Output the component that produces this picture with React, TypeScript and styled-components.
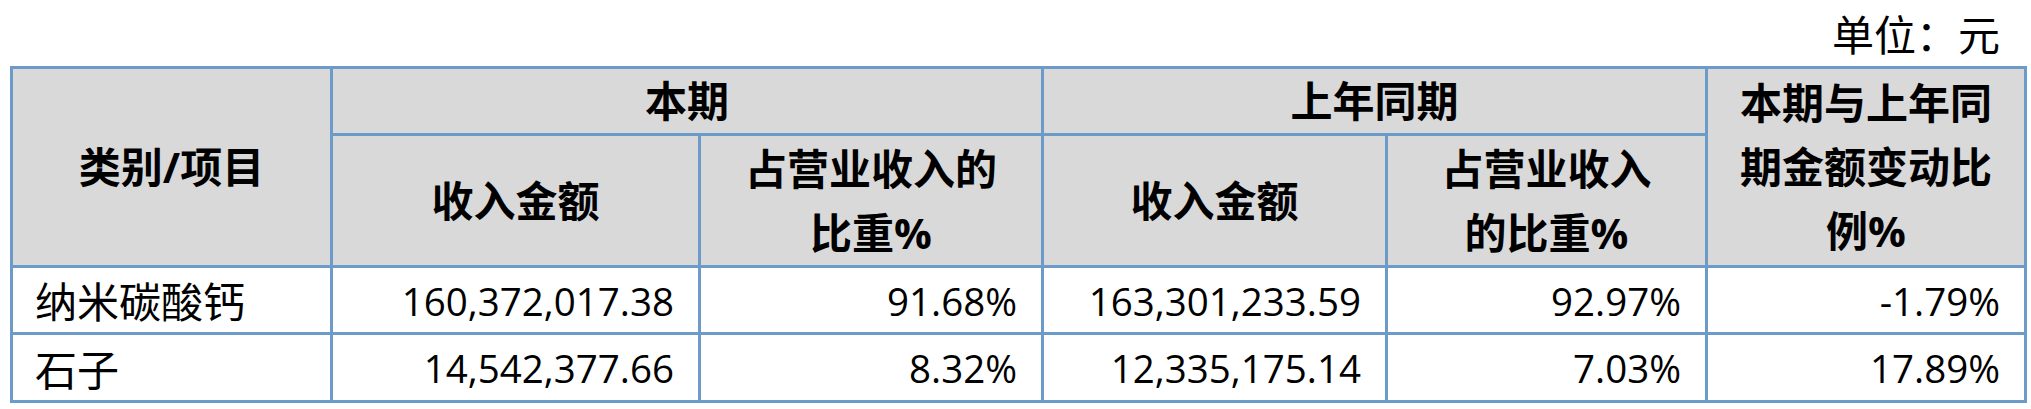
import * as React from 'react'
import styled, { createGlobalStyle } from 'styled-components'

const GlobalStyle = createGlobalStyle`
  html, body {
    margin: 0;
    padding: 0;
    background: #fff;
  }
  body {
    width: 2031px;
    height: 409px;
    overflow: hidden;
    font-family: 'Open Sans', 'Noto Sans CJK SC', sans-serif;
    color: #000;
  }
`

const Page = styled.div`
  display: flex;
  flex-direction: column;
  padding: 0 5px 0 10px;
`

const UnitLine = styled.div`
  height: 66px;
  display: flex;
  align-items: center;
  justify-content: flex-end;
  padding-right: 26px;
  font-family: 'Noto Sans CJK SC', sans-serif;
  font-size: 42px;
  line-height: 1;
`

const Table = styled.table`
  width: 2016px;
  border-collapse: collapse;
  table-layout: fixed;
`

const HeadRow = styled.tr<{ h: number }>`
  height: ${(p) => p.h}px;
`

const BodyRow = styled.tr<{ h: number }>`
  height: ${(p) => p.h}px;
`

const Th = styled.th`
  border: 3px solid #6c9bc9;
  background: #d9d9d9;
  font-family: 'Open Sans', 'Noto Sans CJK SC', sans-serif;
  font-weight: 700;
  font-size: 42px;
  line-height: 64px;
  text-align: center;
  vertical-align: middle;
  padding: 0 10px;
`

const Td = styled.td<{ num?: boolean }>`
  border: 3px solid #6c9bc9;
  background: #fff;
  font-family: ${(p) => (p.num ? "'Open Sans', sans-serif" : "'Noto Sans CJK SC', sans-serif")};
  font-size: ${(p) => (p.num ? '38.5px' : '42px')};
  line-height: 1;
  text-align: ${(p) => (p.num ? 'right' : 'left')};
  vertical-align: middle;
  padding: ${(p) => (p.num ? '2px 24px 0 0' : '0 0 0 22px')};
  white-space: nowrap;
`

const colWidths = [320, 368, 343, 344, 320, 319]

const rows = [
  ['纳米碳酸钙', '160,372,017.38', '91.68%', '163,301,233.59', '92.97%', '-1.79%'],
  ['石子', '14,542,377.66', '8.32%', '12,335,175.14', '7.03%', '17.89%'],
]

const App: React.FunctionComponent = () => {
  return (
    <Page>
      <GlobalStyle />
      <UnitLine>单位：元</UnitLine>
      <Table>
        <colgroup>
          {colWidths.map((w, i) => (
            <col key={`c${i}`} style={{ width: w }} />
          ))}
        </colgroup>
        <thead>
          <HeadRow h={66}>
            <Th rowSpan={2}>类别/项目</Th>
            <Th colSpan={2}>本期</Th>
            <Th colSpan={2}>上年同期</Th>
            <Th rowSpan={2}>
              本期与上年同
              <br />
              期金额变动比
              <br />
              例%
            </Th>
          </HeadRow>
          <HeadRow h={132}>
            <Th>收入金额</Th>
            <Th>
              占营业收入的
              <br />
              比重%
            </Th>
            <Th>收入金额</Th>
            <Th>
              占营业收入
              <br />
              的比重%
            </Th>
          </HeadRow>
        </thead>
        <tbody>
          {rows.map((r, i) => (
            <BodyRow key={r[0]} h={i === 0 ? 67 : 68}>
              {r.map((cell, j) => (
                <Td key={`${r[0]}_${j}`} num={j > 0}>
                  {cell}
                </Td>
              ))}
            </BodyRow>
          ))}
        </tbody>
      </Table>
    </Page>
  )
}

export default App
